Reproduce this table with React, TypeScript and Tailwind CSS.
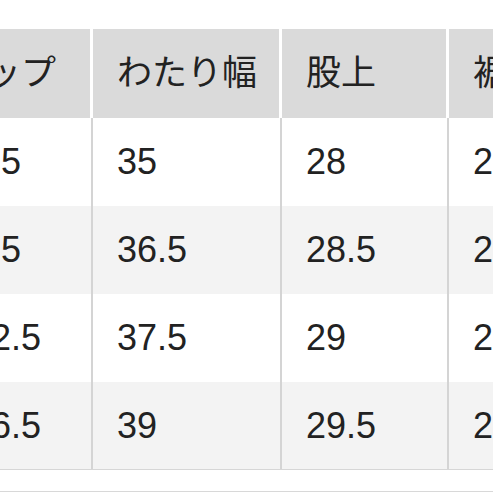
const headers = ['ヒップ', 'わたり幅', '股上', '裾幅'];

const rows = [
  ['94.5', '35', '28', '21'],
  ['98.5', '36.5', '28.5', '21.5'],
  ['102.5', '37.5', '29', '22'],
  ['106.5', '39', '29.5', '22.5'],
];

const widths = ['w-[166px]', 'w-[189px]', 'w-[167px]', 'w-[167px]'];

export default function App() {
  return (
    <div
      className="w-[493px] h-[493px] overflow-hidden bg-white text-[#222222]"
      style={{ fontFamily: '"Liberation Sans", "Noto Sans CJK JP", sans-serif' }}
    >
      <div className="pt-[29px] ml-[-73px] w-[700px]">
        {/* ヘッダー */}
        <div className="flex h-[89px] bg-[#dadada]">
          {headers.map((h, i) => (
            <div
              key={h}
              className={`${widths[i]} shrink-0 flex items-center pl-[24px] text-[35px] border-r-[3px] border-white`}
            >
              {h}
            </div>
          ))}
        </div>

        {/* データ行 */}
        {rows.map((row, r) => (
          <div
            key={r}
            className={`flex h-[88px] ${r % 2 === 1 ? 'bg-[#f3f3f3]' : 'bg-white'} ${r === rows.length - 1 ? 'border-b border-[#d6d6d6]' : ''}`}
          >
            {row.map((v, i) => (
              <div
                key={i}
                className={`${widths[i]} shrink-0 flex items-center pl-[24px] text-[36px] border-r-2 border-[#d4d4d4]`}
              >
                {v}
              </div>
            ))}
          </div>
        ))}

        <div className="h-[21px]" />
        <div className="h-px bg-[#d8d8d8]" />
      </div>
    </div>
  );
}
